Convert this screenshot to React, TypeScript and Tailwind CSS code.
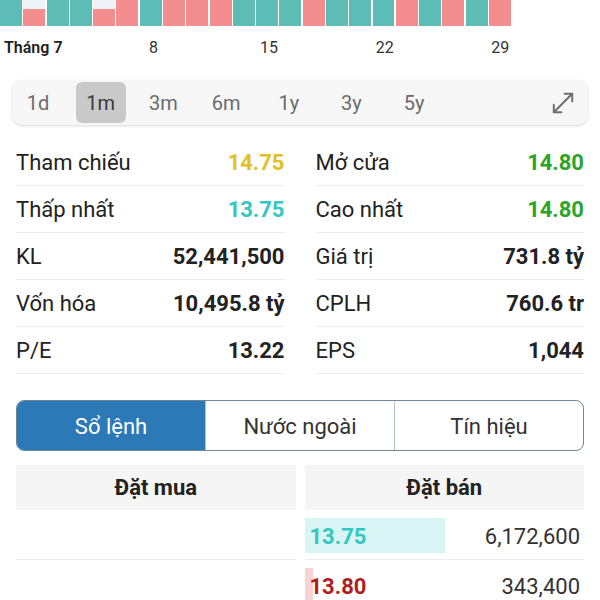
import React from "react";

// T = tăng (teal), G = giảm (pink), H = giảm một phần (nửa trên nhạt)
const bars = "THTTHGTGGGTTTGTTTGTGTG".split("");

const labels: Record<number, string> = {
  0: "Tháng 7",
  6: "8",
  11: "15",
  16: "22",
  21: "29",
};

const ranges = ["1d", "1m", "3m", "6m", "1y", "3y", "5y"];

const leftStats = [
  { label: "Tham chiếu", value: "14.75", color: "text-[#e2c123]" },
  { label: "Thấp nhất", value: "13.75", color: "text-[#34c7c1]" },
  { label: "KL", value: "52,441,500", color: "text-[#222]" },
  { label: "Vốn hóa", value: "10,495.8 tỷ", color: "text-[#222]" },
  { label: "P/E", value: "13.22", color: "text-[#222]" },
];

const rightStats = [
  { label: "Mở cửa", value: "14.80", color: "text-[#2aa52a]" },
  { label: "Cao nhất", value: "14.80", color: "text-[#2aa52a]" },
  { label: "Giá trị", value: "731.8 tỷ", color: "text-[#222]" },
  { label: "CPLH", value: "760.6 tr", color: "text-[#222]" },
  { label: "EPS", value: "1,044", color: "text-[#222]" },
];

const asks = [
  { price: "13.75", volume: "6,172,600", depth: 140, text: "text-[#34c7c1]", bg: "bg-[#d8f4f4]" },
  { price: "13.80", volume: "343,400", depth: 8, text: "text-[#b11d1d]", bg: "bg-[#f8d3d3]" },
];

function StatColumn({ items }: { items: typeof leftStats }) {
  return (
    <div className="flex-1 flex flex-col">
      {items.map((s) => (
        <div
          key={s.label}
          className="h-[47px] flex items-center justify-between border-b border-[#ededed]"
        >
          <span className="text-[22px] text-[#222]">{s.label}</span>
          <span className={`text-[22px] font-bold ${s.color}`}>{s.value}</span>
        </div>
      ))}
    </div>
  );
}

export default function App() {
  return (
    <div className="w-[600px] h-[600px] overflow-hidden bg-white font-['Roboto','Liberation_Sans',sans-serif]">
      {/* mini chart */}
      <div className="flex w-[511px] h-[26px] gap-[1.3px]">
        {bars.map((b, i) => (
          <div key={i} className="flex-1 min-w-0 flex flex-col">
            {b === "H" && <div className="h-[9px] bg-[#eef3f7]" />}
            <div className={`flex-1 ${b === "T" ? "bg-[#5dbcb5]" : "bg-[#f38d8e]"}`} />
          </div>
        ))}
      </div>
      <div className="flex w-[511px] gap-[1.3px] mt-[12px] h-[19px]">
        {bars.map((_, i) => (
          <div
            key={i}
            className={`flex-1 min-w-0 flex whitespace-nowrap text-[16px] leading-[19px] ${
              i === 0 ? "justify-start pl-1 font-semibold text-[#222]" : "justify-center text-[#333]"
            }`}
          >
            {labels[i] ?? ""}
          </div>
        ))}
      </div>

      {/* range selector */}
      <div className="mx-3 mt-[23px] h-[45px] rounded-[10px] bg-[#f7f7f7] shadow-[0_1px_3px_rgba(0,0,0,0.15)] flex items-center pl-[1px] pr-[12px]">
        <div className="flex items-center gap-[12.7px]">
          {ranges.map((r) => (
            <div
              key={r}
              className={`w-[50px] h-[41px] flex items-center justify-center rounded-md text-[20px] ${
                r === "1m" ? "bg-[#c9c9c9] text-[#3a3a3a]" : "text-[#6b6b6b]"
              }`}
            >
              {r}
            </div>
          ))}
        </div>
        <svg
          className="ml-auto"
          width="26"
          height="26"
          viewBox="0 0 24 24"
          fill="none"
          stroke="#6e6e6e"
          strokeWidth="1.8"
          strokeLinecap="round"
          strokeLinejoin="round"
        >
          <path d="M3.5 20.5 20.5 3.5" />
          <path d="M13.5 3.5h7v7" />
          <path d="M10.5 20.5h-7v-7" />
        </svg>
      </div>

      {/* stats */}
      <div className="flex px-4 gap-[31px] mt-[14px]">
        <StatColumn items={leftStats} />
        <StatColumn items={rightStats} />
      </div>

      {/* tabs */}
      <div className="mx-4 mt-[26px] h-[51px] flex rounded-lg border border-[#6e8698] overflow-hidden">
        <div className="flex-1 flex items-center justify-center pt-[2px] bg-[#2b79b6] text-white text-[22px]">
          Sổ lệnh
        </div>
        <div className="flex-1 flex items-center justify-center pt-[2px] border-l border-[#b5bcc3] text-[#333] text-[22px]">
          Nước ngoài
        </div>
        <div className="flex-1 flex items-center justify-center pt-[2px] border-l border-[#b5bcc3] text-[#333] text-[22px]">
          Tín hiệu
        </div>
      </div>

      {/* order book */}
      <div className="flex px-4 gap-[9px] mt-[14px]">
        <div className="flex-1 flex flex-col">
          <div className="h-[45px] bg-[#f5f5f5] flex items-center justify-center text-[22px] font-bold text-[#222]">
            Đặt mua
          </div>
          {asks.map((a) => (
            <div key={a.price} className="h-[50px] border-b border-[#ededed]" />
          ))}
        </div>
        <div className="flex-1 flex flex-col">
          <div className="h-[45px] bg-[#f5f5f5] flex items-center justify-center text-[22px] font-bold text-[#222]">
            Đặt bán
          </div>
          {asks.map((a) => (
            <div
              key={a.price}
              className="relative h-[50px] flex items-center justify-between border-b border-[#ededed] pt-[3px] pl-[5px] pr-[4px]"
            >
              <div
                className={`absolute left-0 top-[8px] bottom-[6px] ${a.bg}`}
                style={{ width: a.depth }}
              />
              <span className={`relative text-[22px] font-bold ${a.text}`}>{a.price}</span>
              <span className="relative text-[22px] text-[#333]">{a.volume}</span>
            </div>
          ))}
        </div>
      </div>
    </div>
  );
}
